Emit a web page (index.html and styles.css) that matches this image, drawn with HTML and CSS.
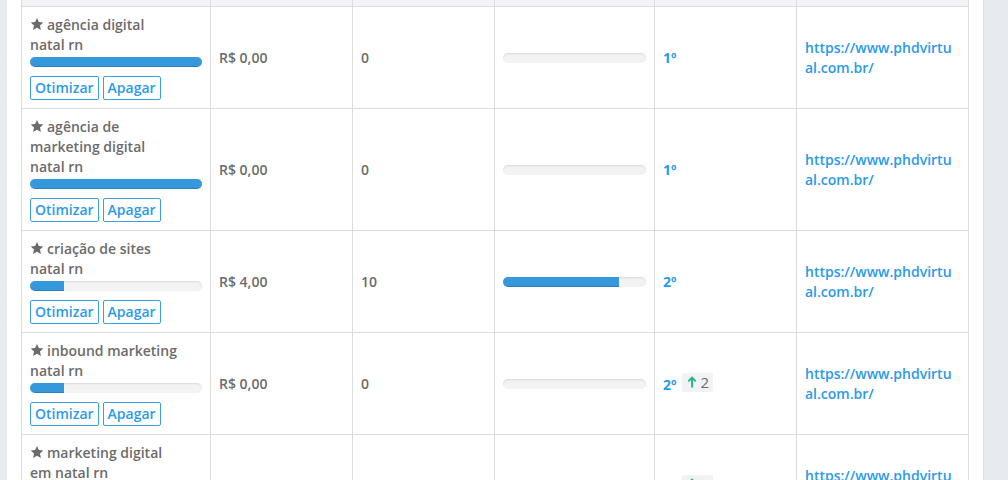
FILE: index.html
```html
<!DOCTYPE html>
<html lang="pt-BR">
<head>
<meta charset="utf-8">
<title>Palavras-chave</title>
<link rel="stylesheet" href="styles.css">
</head>
<body>
<div class="panel">
  <table class="kw-table">
    <colgroup>
      <col class="c-kw"><col class="c-cpc"><col class="c-vol"><col class="c-comp"><col class="c-pos"><col class="c-url">
    </colgroup>
    <thead>
      <tr><th></th><th></th><th></th><th></th><th></th><th></th></tr>
    </thead>
    <tbody>
      <tr>
        <td class="kw">
          <div class="kw-title"><svg class="star" viewBox="0 0 24 24"><path d="M12 1.5l3.2 7.1 7.6.8-5.7 5.2 1.6 7.6L12 18.3l-6.7 3.9 1.6-7.6L1.2 9.4l7.6-.8z"/></svg>agência digital natal rn</div>
          <div class="progress"><div class="bar" style="width:100%"></div></div>
          <div class="actions"><button class="btn">Otimizar</button><button class="btn">Apagar</button></div>
        </td>
        <td>R$ 0,00</td>
        <td>0</td>
        <td><div class="progress"><div class="bar" style="width:0%"></div></div></td>
        <td><span class="rank">1º</span></td>
        <td><a class="url" href="#">https://www.phdvirtual.com.br/</a></td>
      </tr>
      <tr>
        <td class="kw">
          <div class="kw-title"><svg class="star" viewBox="0 0 24 24"><path d="M12 1.5l3.2 7.1 7.6.8-5.7 5.2 1.6 7.6L12 18.3l-6.7 3.9 1.6-7.6L1.2 9.4l7.6-.8z"/></svg>agência de marketing digital natal rn</div>
          <div class="progress"><div class="bar" style="width:100%"></div></div>
          <div class="actions"><button class="btn">Otimizar</button><button class="btn">Apagar</button></div>
        </td>
        <td>R$ 0,00</td>
        <td>0</td>
        <td><div class="progress"><div class="bar" style="width:0%"></div></div></td>
        <td><span class="rank">1º</span></td>
        <td><a class="url" href="#">https://www.phdvirtual.com.br/</a></td>
      </tr>
      <tr>
        <td class="kw">
          <div class="kw-title"><svg class="star" viewBox="0 0 24 24"><path d="M12 1.5l3.2 7.1 7.6.8-5.7 5.2 1.6 7.6L12 18.3l-6.7 3.9 1.6-7.6L1.2 9.4l7.6-.8z"/></svg>criação de sites natal rn</div>
          <div class="progress"><div class="bar" style="width:20%"></div></div>
          <div class="actions"><button class="btn">Otimizar</button><button class="btn">Apagar</button></div>
        </td>
        <td>R$ 4,00</td>
        <td>10</td>
        <td><div class="progress"><div class="bar" style="width:81%"></div></div></td>
        <td><span class="rank">2º</span></td>
        <td><a class="url" href="#">https://www.phdvirtual.com.br/</a></td>
      </tr>
      <tr>
        <td class="kw">
          <div class="kw-title"><svg class="star" viewBox="0 0 24 24"><path d="M12 1.5l3.2 7.1 7.6.8-5.7 5.2 1.6 7.6L12 18.3l-6.7 3.9 1.6-7.6L1.2 9.4l7.6-.8z"/></svg>inbound marketing natal rn</div>
          <div class="progress"><div class="bar" style="width:20%"></div></div>
          <div class="actions"><button class="btn">Otimizar</button><button class="btn">Apagar</button></div>
        </td>
        <td>R$ 0,00</td>
        <td>0</td>
        <td><div class="progress"><div class="bar" style="width:0%"></div></div></td>
        <td><span class="rank">2º</span><span class="change"><svg class="arrow" viewBox="0 0 10 12"><path d="M5 11.5V2M1.3 5.4L5 1.6l3.7 3.8"/></svg>2</span></td>
        <td><a class="url" href="#">https://www.phdvirtual.com.br/</a></td>
      </tr>
      <tr>
        <td class="kw">
          <div class="kw-title"><svg class="star" viewBox="0 0 24 24"><path d="M12 1.5l3.2 7.1 7.6.8-5.7 5.2 1.6 7.6L12 18.3l-6.7 3.9 1.6-7.6L1.2 9.4l7.6-.8z"/></svg>marketing digital em natal rn</div>
          <div class="progress"><div class="bar" style="width:20%"></div></div>
          <div class="actions"><button class="btn">Otimizar</button><button class="btn">Apagar</button></div>
        </td>
        <td>R$ 0,00</td>
        <td>0</td>
        <td><div class="progress"><div class="bar" style="width:0%"></div></div></td>
        <td><span class="rank">3º</span><span class="change"><svg class="arrow" viewBox="0 0 10 12"><path d="M5 11.5V2M1.3 5.4L5 1.6l3.7 3.8"/></svg>1</span></td>
        <td><a class="url" href="#">https://www.phdvirtual.com.br/</a></td>
      </tr>
    </tbody>
  </table>
</div>
</body>
</html>
```
FILE: styles.css
```css
html, body {
  margin: 0;
  padding: 0;
}
body {
  background: #e7eaef;
  font-family: "Open Sans", "Liberation Sans", sans-serif;
  font-size: 14px;
  line-height: 20px;
  color: #676a6c;
  overflow: hidden;
}
.panel {
  margin: 0 0 0 7px;
  width: 977px;
  box-sizing: border-box;
  padding: 0 16px 20px 14px;
  background: #fff;
  border-right: 1px solid #dde1e7;
}
.kw-table {
  width: 947px;
  border-collapse: collapse;
  table-layout: fixed;
}
.c-kw { width: 189px; }
.c-cpc { width: 142px; }
.c-vol { width: 142px; }
.c-comp { width: 160px; }
.c-pos { width: 142px; }
.c-url { width: 172px; }
.kw-table th {
  background: #f3f4f7;
  height: 6px;
  padding: 0;
  border: 1px solid #dcdcdc;
  border-top: 0;
}
.kw-table td {
  border: 1px solid #dcdcdc;
  padding: 8px;
  vertical-align: middle;
  font-weight: 600;
  color: #6b6b6b;
}
.kw-table td.kw {
  vertical-align: top;
}
.kw-title {
  color: #6b6b6b;
  max-width: 152px;
}
.star {
  width: 14px;
  height: 14px;
  fill: #6b6b6b;
  margin-right: 3px;
  vertical-align: -1px;
}
.progress {
  height: 10px;
  border-radius: 5px;
  background: #f3f3f3;
  box-shadow: inset 0 1px 2px rgba(0,0,0,.1);
  overflow: hidden;
}
.kw .progress {
  margin: 2px 0 9px;
}
.bar {
  height: 100%;
  background: #3498db;
  box-shadow: inset 0 -1px 0 rgba(0,0,0,.15);
}
.actions {
  display: flex;
  gap: 4px;
}
.btn {
  font-family: inherit;
  font-size: 14px;
  font-weight: 600;
  color: #2b9ae9;
  background: #fff;
  border: 1px solid #3a9fe6;
  border-radius: 2px;
  height: 24px;
  padding: 0 4px;
  line-height: 20px;
  cursor: pointer;
}
.rank {
  color: #2b9ae9;
  font-weight: 700;
}
.change {
  display: inline-flex;
  align-items: center;
  margin-left: 6px;
  padding: 0 4px 0 5px;
  background: #f1f2f4;
  border-radius: 2px;
  font-weight: 400;
  font-size: 15px;
  color: #6b6b6b;
  line-height: 19px;
  vertical-align: 1px;
}
.arrow {
  width: 10px;
  height: 12px;
  margin-right: 3px;
  fill: none;
  stroke: #19b98a;
  stroke-width: 1.9;
}
.url {
  display: block;
  max-width: 147px;
  color: #2b9ae9;
  text-decoration: none;
  word-break: break-all;
  font-weight: 600;
}
```
